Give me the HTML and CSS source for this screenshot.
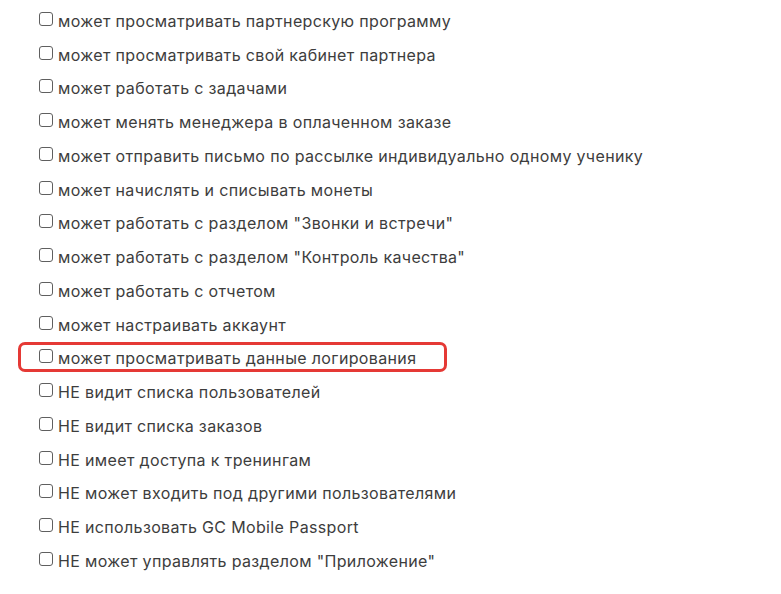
FILE: index.html
```html
<!DOCTYPE html>
<html lang="ru">
<head>
<meta charset="utf-8">
<link rel="stylesheet" href="styles.css">
</head>
<body>
<ul class="perms">
  <li class="row"><span class="box"></span><span class="label">может просматривать партнерскую программу</span></li>
  <li class="row"><span class="box"></span><span class="label">может просматривать свой кабинет партнера</span></li>
  <li class="row"><span class="box"></span><span class="label">может работать с задачами</span></li>
  <li class="row"><span class="box"></span><span class="label">может менять менеджера в оплаченном заказе</span></li>
  <li class="row"><span class="box"></span><span class="label">может отправить письмо по рассылке индивидуально одному ученику</span></li>
  <li class="row"><span class="box"></span><span class="label">может начислять и списывать монеты</span></li>
  <li class="row"><span class="box"></span><span class="label">может работать с разделом "Звонки и встречи"</span></li>
  <li class="row"><span class="box"></span><span class="label">может работать с разделом "Контроль качества"</span></li>
  <li class="row"><span class="box"></span><span class="label">может работать с отчетом</span></li>
  <li class="row"><span class="box"></span><span class="label">может настраивать аккаунт</span></li>
  <li class="row marked"><span class="box"></span><span class="label">может просматривать данные логирования</span></li>
  <li class="row"><span class="box"></span><span class="label">НЕ видит списка пользователей</span></li>
  <li class="row"><span class="box"></span><span class="label">НЕ видит списка заказов</span></li>
  <li class="row"><span class="box"></span><span class="label">НЕ имеет доступа к тренингам</span></li>
  <li class="row"><span class="box"></span><span class="label">НЕ может входить под другими пользователями</span></li>
  <li class="row"><span class="box"></span><span class="label">НЕ использовать GC Mobile Passport</span></li>
  <li class="row"><span class="box"></span><span class="label">НЕ может управлять разделом "Приложение"</span></li>
</ul>
</body>
</html>
```

FILE: styles.css
```css
html, body {
  margin: 0;
  padding: 0;
  background: #ffffff;
}
body {
  width: 781px;
  height: 594px;
  overflow: hidden;
  font-family: Inter, "Noto Sans", "Liberation Sans", sans-serif;
  color: #3d3d3d;
}
.perms {
  list-style: none;
  margin: 0;
  padding: 3.1px 0 0 0;
}
.row {
  position: relative;
  display: flex;
  align-items: center;
  height: 33.75px;
  padding-left: 39px;
  box-sizing: border-box;
  font-size: 16px;
  letter-spacing: 0.35px;
}
.box {
  flex: none;
  width: 14px;
  height: 14px;
  box-sizing: border-box;
  border: 1.3px solid #5f5f5f;
  border-radius: 3px;
  background: #fff;
  margin-right: 5px;
  position: relative;
  top: -1px;
}
.label {
  white-space: nowrap;
  position: relative;
  top: 1px;
}
.marked::after {
  content: "";
  position: absolute;
  left: 18px;
  top: 1.4px;
  width: 429px;
  height: 30px;
  box-sizing: border-box;
  border: 3.5px solid #e53935;
  border-radius: 7px;
}
```
